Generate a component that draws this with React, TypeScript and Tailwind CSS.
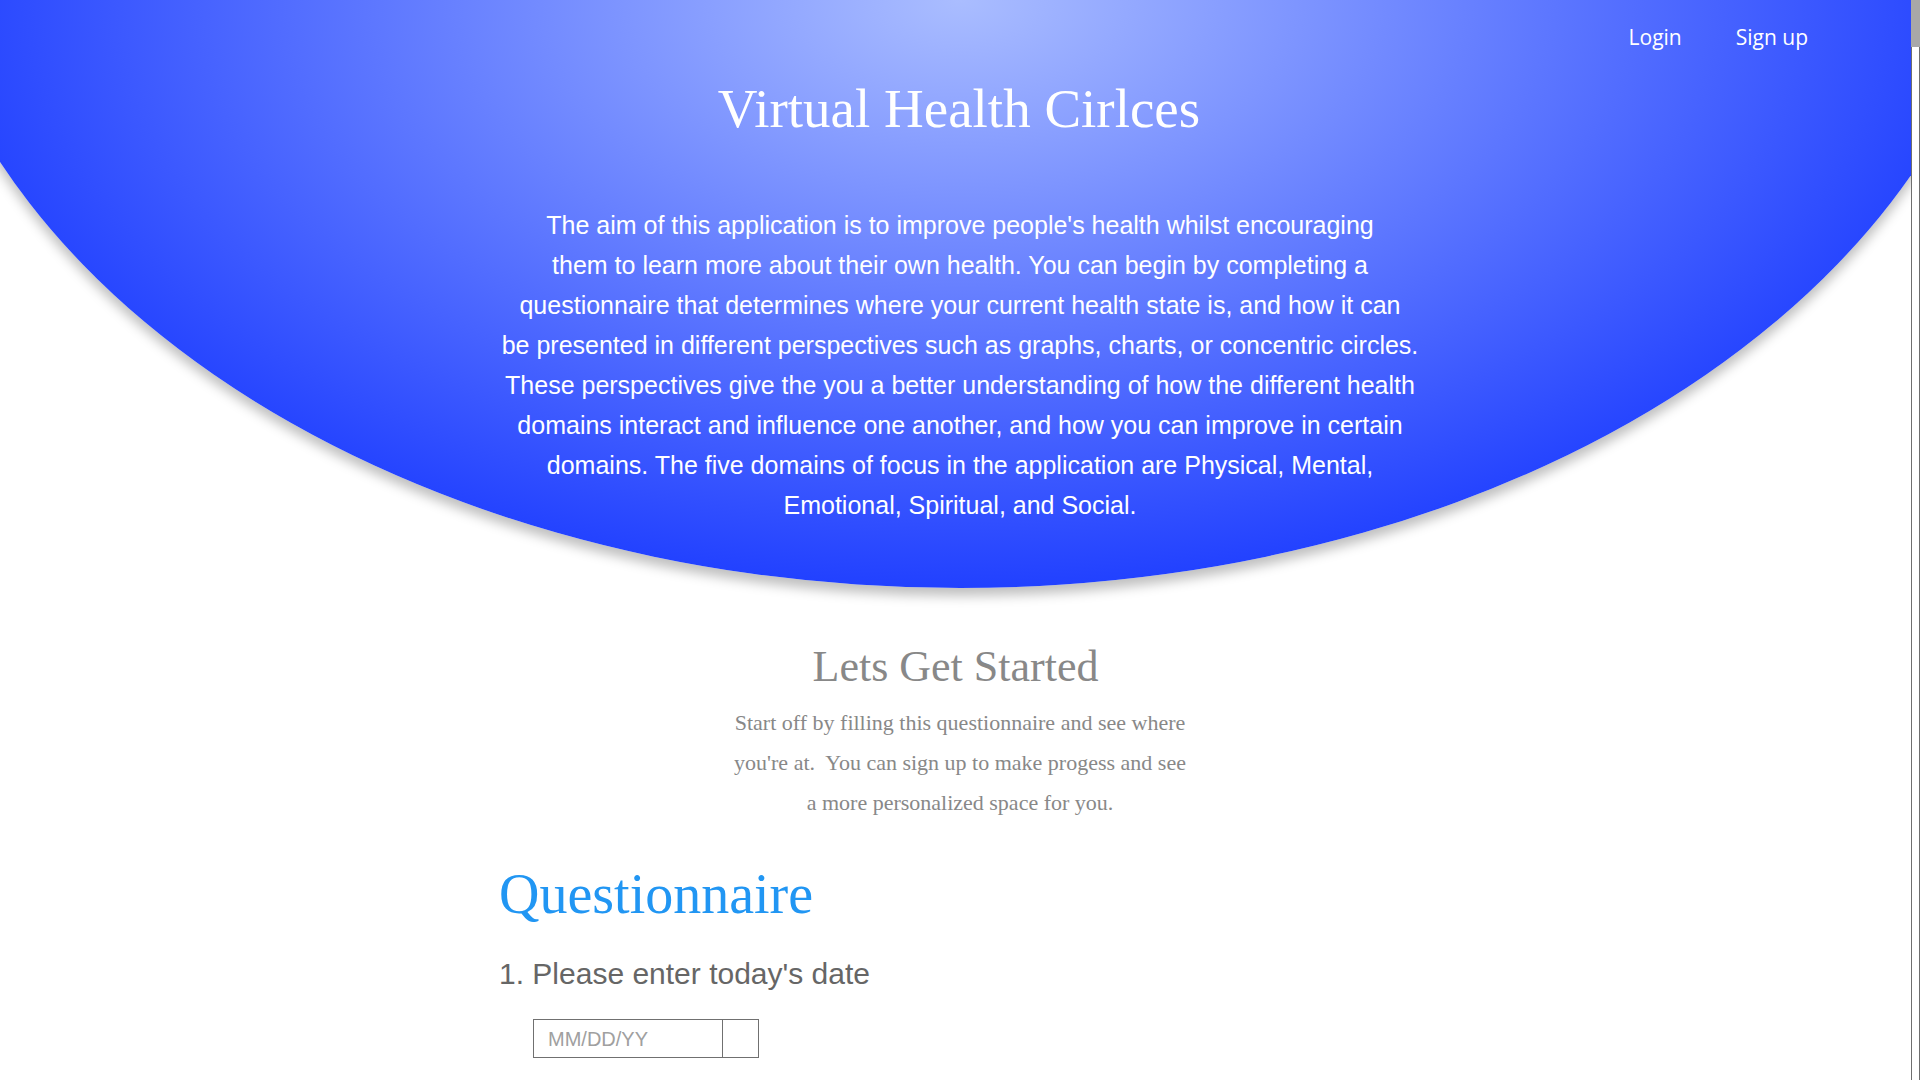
const intro = [
  "The aim of this application is to improve people's health whilst encouraging",
  'them to learn more about their own health. You can begin by completing a',
  'questionnaire that determines where your current health state is, and how it can',
  'be presented in different perspectives such as graphs, charts, or concentric circles.',
  'These perspectives give the you a better understanding of how the different health',
  'domains interact and influence one another, and how you can improve in certain',
  'domains. The five domains of focus in the application are Physical, Mental,',
  'Emotional, Spiritual, and Social.'
];

const started = [
  'Start off by filling this questionnaire and see where',
  "you're at.\u00a0 You can sign up to make progess and see",
  'a more personalized space for you.'
];

function Lines({ lines }: { lines: string[] }) {
  return (
    <>
      {lines.map((line, i) => (
        <span key={i} className="block">
          {line}
        </span>
      ))}
    </>
  );
}

export default function App() {
  return (
    <div className="flex h-screen w-full overflow-hidden bg-white">
      <main className="relative min-w-0 flex-1 overflow-hidden">
        <header className="relative h-[588px]">
          <div className="absolute left-[-95px] top-[-868px] h-[1456px] w-[2110px] rounded-[50%] bg-[radial-gradient(1100px_620px_at_50%_868px,#aabdff,#1a3aff)] shadow-[0_8px_12px_rgba(0,0,0,0.25)]" />
          <div className="relative">
            <nav className="flex justify-end gap-[54px] pr-[103px] pt-[22px] font-['Open_Sans',sans-serif] text-[21px] leading-[30px] text-white">
              <a href="#">Login</a>
              <a href="#">Sign up</a>
            </nav>
            <h1 className="mt-[27px] pl-[7px] text-center font-['Liberation_Serif',serif] text-[55px] leading-[60px] text-white">
              Virtual Health Cirlces
            </h1>
            <p className="mt-[66px] pl-[9px] text-center font-['Liberation_Sans',Arial,sans-serif] text-[25px] leading-[40px] text-white">
              <Lines lines={intro} />
            </p>
          </div>
        </header>

        <section className="text-center font-['Liberation_Serif',serif] text-[#888888]">
          <h2 className="mt-[54px] text-[44px] leading-[50px]">Lets Get Started</h2>
          <p className="mt-[11px] pl-[9px] text-[22px] leading-[40px]">
            <Lines lines={started} />
          </p>
        </section>

        <section className="pl-[499px]">
          <h2 className="mt-[41px] font-['Liberation_Serif',serif] text-[56px] leading-[60px] text-[#2196f3]">
            Questionnaire
          </h2>
          <h3 className="mt-[32px] font-['Liberation_Sans',Arial,sans-serif] text-[30px] leading-[36px] text-[#666666]">
            1. Please enter today's date
          </h3>
          <div className="ml-[34px] mt-[27px] flex h-[39px] w-[226px] border border-[#707070] font-['Liberation_Sans',Arial,sans-serif]">
            <input
              type="text"
              placeholder="MM/DD/YY"
              className="min-w-0 flex-1 bg-transparent pl-[14px] text-[20px] text-[#333333] outline-none placeholder:text-[#a0a0a0]"
            />
            <span className="w-[36px] border-l border-[#707070]" />
          </div>
        </section>
      </main>

      <div className="flex w-[9px] flex-col">
        <div className="h-[47px] bg-[#a8a8a8]" />
        <div className="flex-1 border-x border-[#6f6f6f] bg-white" />
      </div>
    </div>
  );
}
